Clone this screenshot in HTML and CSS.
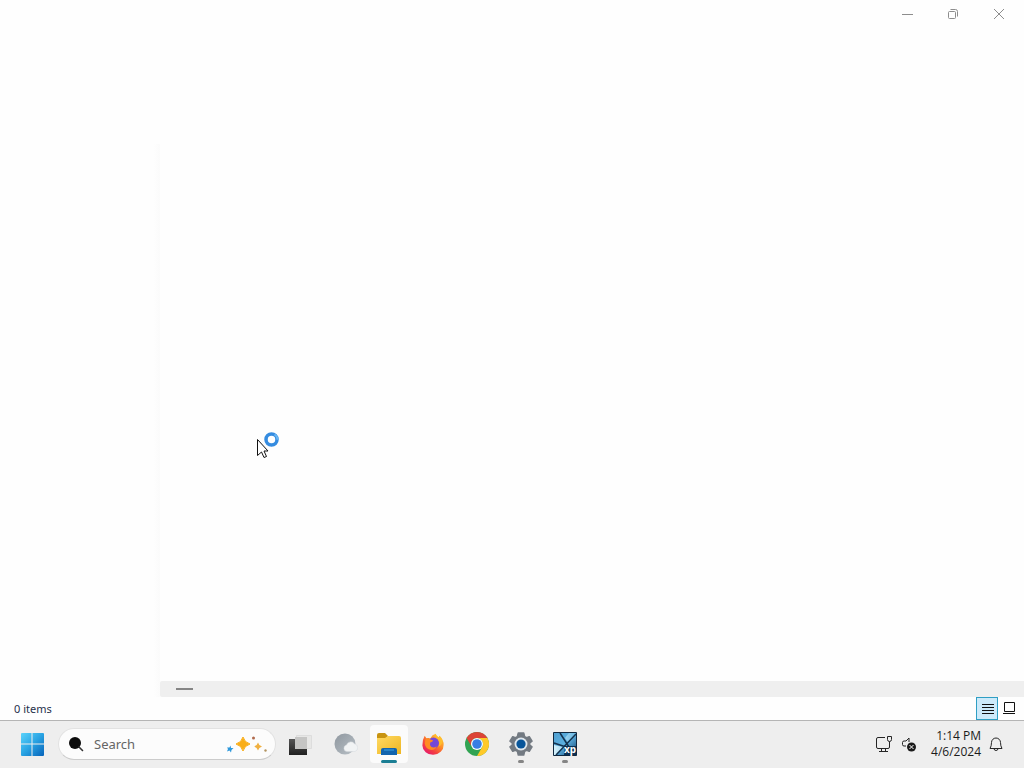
FILE: index.html
```html
<!DOCTYPE html>
<html lang="en">
<head>
<meta charset="utf-8">
<title>File Explorer</title>
<link rel="stylesheet" href="styles.css">
</head>
<body>
<main class="window">
  <header class="titlebar">
    <button class="caption" aria-label="Minimize"><svg width="12" height="12" viewBox="0 0 12 12"><path d="M1 6.5h11" /></svg></button>
    <button class="caption" aria-label="Restore"><svg width="12" height="12" viewBox="0 0 12 12"><rect x="1.5" y="3.500" width="7" height="7" rx="1"/><path d="M3.500 1.500h5q2 0 2 2v5"/></svg></button>
    <button class="caption" aria-label="Close"><svg width="12" height="12" viewBox="0 0 12 12"><path d="M1 1l10 10M11 1L1 11"/></svg></button>
  </header>
  <div class="content">
    <nav class="sidebar" aria-label="Navigation"></nav>
    <section class="files" aria-label="Files">
      <div class="scrollbar"><div class="thumb"></div></div>
    </section>
  </div>
  <footer class="status">
    <span class="count">0 items</span>
    <button class="view active" aria-label="Details view"><svg width="14" height="12" viewBox="0 0 14 12"><path d="M2 1.500h12M2 4.500h12M2 7.500h12M2 10.500h12"/></svg></button>
    <button class="view" aria-label="Large icons view"><svg width="14" height="14" viewBox="0 0 14 14"><path d="M2.500 .5h10v9h-10zM1 11.500h12"/></svg></button>
  </footer>
</main>
<footer class="taskbar">
  <button class="start" aria-label="Start">
    <svg width="24" height="24" viewBox="0 0 24 24">
      <defs><linearGradient id="win" gradientUnits="userSpaceOnUse" x1="1" y1="1" x2="23" y2="23"><stop offset="0" stop-color="#5bd3fb"/><stop offset=".5" stop-color="#2aa5e4"/><stop offset="1" stop-color="#0968bd"/></linearGradient></defs>
      <path fill="url(#win)" d="M2 1h9.500v10.500H1V2q0-1 1-1zM12.500 1H23q1 0 1 1v9.500H12.500zM1 12.500h10.500V24H2q-1 0-1-1zM12.500 12.500H24V23q0 1-1 1H12.500z"/>
    </svg>
  </button>
  <label class="search">
    <svg width="16" height="16" viewBox="0 0 16 16"><circle cx="7" cy="7" r="6" fill="#0c0c0c"/><path d="M11 11l3.500 3.500" stroke="#333" stroke-width="1.600" stroke-linecap="round"/></svg>
    <input type="text" placeholder="Search" aria-label="Search">
    <svg class="sparkles" width="42" height="20" viewBox="0 0 42 20">
      <path fill="#f9ae19" stroke="#f9ae19" stroke-linejoin="round" d="M17 3q1.500 5.500 7 7q-5.500 1.500-7 7q-1.500-5.500-7-7q5.500-1.500 7-7z"/>
      <path fill="#f0b040" d="M32 8.500q.8 3.200 4 4q-3.200.8-4 4q-.8-3.200-4-4q3.200-.8 4-4z"/>
      <path fill="#2d98dc" d="M4.500 11.500l.5 2.500 2.500 0-2 2-.5 2.500-1.500-2-2.500 1 1-2.500-1-1.500 2.500 0z"/>
      <circle cx="27.500" cy="4" r="1.500" fill="#b06a4c"/><circle cx="39.500" cy="16.500" r="1.200" fill="#b39562"/>
    </svg>
  </label>
  <nav class="apps" aria-label="Apps">
    <button class="app" aria-label="Task view"><svg width="26" height="26" viewBox="0 0 26 26"><defs><linearGradient id="tv" x2="0" y2="1"><stop stop-color="#555"/><stop offset="1" stop-color="#202020"/></linearGradient></defs><path fill="#e7e7e6" stroke="#dddddd" d="M8.500 4.500h15v13h-15z"/><path fill="url(#tv)" d="M1 8h18v16H1z"/><path fill="#c5c5c4" d="M7 6h12v12H7z"/></svg></button>
    <button class="app" aria-label="Copilot"><svg width="26" height="26" viewBox="0 0 26 26"><defs><linearGradient id="gr" x2="1" y2="1"><stop stop-color="#8f979f"/><stop offset="1" stop-color="#b8c0c6"/></linearGradient></defs><circle cx="13" cy="13" r="10.500" fill="url(#gr)"/><path d="M15 20.500a3.300 3.300 0 01-.5-6.500a4.500 4.500 0 018-1.200a4 4 0 01.5 7.700z" fill="#f1f3f4" stroke="#d5d9dc" stroke-width=".5"/></svg></button>
    <button class="app current" aria-label="File Explorer"><svg width="26" height="26" viewBox="0 0 26 26"><defs><linearGradient id="fold" x2="1" y2="1"><stop stop-color="#ffda63"/><stop offset="1" stop-color="#eeb522"/></linearGradient></defs><path fill="#c89412" d="M1 8V4q0-2 2-2h6l3 3-3 4z"/><path fill="url(#fold)" d="M1 7h8l3-2h11q2 0 2 2v16H1z"/><path fill="#1264ad" d="M5 24v-5q0-2 2-2h12q2 0 2 2v5z"/><path fill="#2784c9" d="M8 18h10v2H8z"/></svg></button>
    <button class="app" aria-label="Firefox"><svg width="24" height="24" viewBox="0 0 26 26"><defs><linearGradient id="fire" x1="1" y1="0" x2=".2" y2="1"><stop stop-color="#ffe044"/><stop offset=".42" stop-color="#ff9125"/><stop offset=".75" stop-color="#f33c43"/><stop offset="1" stop-color="#e31572"/></linearGradient></defs><path fill="url(#fire)" d="M4 4l2 3q2-1 4 0q2-4 6-5q0 2 3 4l1-2q5 5 4.500 10a11.500 10.500 0 01-23 .5Q1.500 8 4 4z"/><circle cx="13.500" cy="12" r="6" fill="#7548d8"/><path fill="#ff8b20" d="M5 7q3-1 5 1l3 1q0 2-3 2.500q-1 3 1 4.500q3 2 6-.5q-1 4-6 4q-6-1-7-7z"/><path fill="#ffbd2c" d="M15 2q0 3 3 5q3 4 1 9q5-3 4-8q-1-2-3-4l-1 2z"/></svg></button>
    <button class="app" aria-label="Chrome"><svg width="26" height="26" viewBox="0 0 26 26"><circle cx="13" cy="13" r="12" fill="#31a352"/><path fill="#dc4437" d="M2.600 7A12 12 0 0123.400 7H13a6 6 0 00-5.200 9z"/><path fill="#ffc928" d="M23.400 7A12 12 0 0113 25l5.200-9A6 6 0 0013 7z"/><circle cx="13" cy="13" r="6" fill="#fff"/><circle cx="13" cy="13" r="4.800" fill="#377ee4"/></svg></button>
    <button class="app running" aria-label="Settings"><svg width="24" height="24" viewBox="0 0 26 26"><path fill="#737a82" stroke="#737a82" stroke-width="1.500" stroke-linejoin="round" d="M10 1h6l1 4 2 1 3-1 3 5-2.500 2v2l2.500 2-3 5-3-1-2 1-1 4h-6l-1-4-2-1-3 1-3-5 2.500-2v-2L1 10l3-5 3 1 2-1z"/><circle cx="13" cy="13" r="7" fill="#dfe7ed"/><circle cx="13" cy="13" r="5" fill="#07559a"/></svg></button>
    <button class="app running" aria-label="xp"><svg width="26" height="26" viewBox="0 0 26 26"><defs><linearGradient id="xp" x2="1" y2="1"><stop stop-color="#4f9fd0"/><stop offset=".5" stop-color="#5db0e0"/><stop offset="1" stop-color="#0d3c69"/></linearGradient><linearGradient id="glow" x2="1" y2="0"><stop stop-color="#d5f1fb"/><stop offset="1" stop-color="#62b4e2"/></linearGradient></defs><path fill="url(#xp)" d="M1.500 1.500h23v23h-23z"/><path fill="url(#glow)" d="M2 14l9 2-7 8H2zM17 2h7v2l-8 7-3-4z"/><path fill="none" stroke="#10283f" d="M1.500 1.500h23v23h-23z"/><path fill="none" stroke="#14324f" stroke-width="1.500" d="M8 2l9 14M2 12l12 4M24 3L4 24"/><path fill="#0b3155" d="M13 15h11v9H12z"/><text class="xp" x="12" y="22">xp</text></svg></button>
  </nav>
  <div class="tray">
    <button class="network" aria-label="Network"><svg width="18" height="18" viewBox="0 0 18 18"><path d="M10 2.500H3q-1.500 0-1.500 1.500v8q0 1.500 1.500 1.500h10q1.500 0 1.500-1.500V8M6.500 13.500v3M10.500 13.500v3M4 16.500h9M12.500 1.500h4v3q0 2-2 2t-2-2zM14.500 6.500v3"/></svg></button>
    <button class="volume" aria-label="Volume muted"><svg width="16" height="16" viewBox="0 0 16 16"><path d="M7 6V2L4 5H2Q.5 5 .5 6.500v2Q.5 10 2 10h2"/><circle cx="9.500" cy="11" r="4.500" fill="#1b1b1b" stroke="none"/><path d="M7.500 9l4 4M11.500 9l-4 4" stroke="#fff"/></svg></button>
    <button class="clock"><span>1:14 PM</span><span>4/6/2024</span></button>
    <button class="bell" aria-label="Notifications"><svg width="14" height="16" viewBox="0 0 14 16"><path d="M1 12.500q1.500-2.500 1.500-6a4.500 4.500 0 019 0q0 3.500 1.500 6zM5 12.500q0 2 2 2t2-2"/></svg></button>
  </div>
</footer>
<svg class="cursor" width="24" height="28" viewBox="0 0 24 28"><circle cx="15.500" cy="7.500" r="5.500" fill="#fff" stroke="#358ce0" stroke-width="3.500"/><path d="M18.500 2.500a6 6 0 013 5.200" fill="none" stroke="#68b7f5" stroke-width="2"/><path d="M1.500 7.500v16l4-3.500 2.500 5.500 2.500-1-2.500-5.500h4z" fill="#fff" stroke="#111"/></svg>
</body>
</html>
```
FILE: styles.css
```css
* { box-sizing: border-box; }
body {
  margin: 0;
  min-height: 100vh;
  display: flex;
  flex-direction: column;
  position: relative;
  background: #fefefe;
  color: #1b1b1b;
  font: 12px/16px "Noto Sans", "Open Sans", sans-serif;
}
button {
  display: flex;
  align-items: center;
  justify-content: center;
  padding: 0;
  border: 0;
  background: none;
  color: inherit;
  font: inherit;
}
svg { display: block; flex: none; }
.window { flex: 1; display: flex; flex-direction: column; }
.titlebar { display: flex; justify-content: flex-end; height: 28px; padding-right: 2px; }
.caption { width: 46px; }
.caption svg { fill: none; stroke: #8d8d8d; }
.content { flex: 1; display: flex; }
.sidebar { width: 160px; margin-top: 116px; background: linear-gradient(90deg, #fefefe 96%, #fbfbfb); }
.files { flex: 1; display: flex; flex-direction: column; justify-content: flex-end; }
.scrollbar { height: 16px; padding: 7px 16px; background: #efefef; border-radius: 2px 0 0 2px; }
.thumb { width: 17px; height: 2px; background: #858585; }
.status { display: flex; align-items: center; height: 23px; padding: 0 4px 0 14px; }
.count { flex: 1; color: #27304b; font-size: 11px; }
.view { width: 22px; height: 23px; border: 1px solid transparent; }
.view.active { border-color: #2f9fc4; background: #cdeafa; }
.view svg { fill: none; stroke: #111; }
.taskbar {
  display: flex;
  align-items: center;
  height: 48px;
  padding-bottom: 2px;
  border-top: 1px solid #b5b5b5;
  background: #eeeeee;
}
.start { width: 44px; height: 44px; margin-left: 10px; }
.search {
  display: flex;
  align-items: center;
  gap: 10px;
  width: 218px;
  height: 32px;
  margin: 0 3px 0 4px;
  padding: 0 7px 0 9px;
  border: 1px solid #e2e2e2;
  border-bottom-color: #cccccc;
  border-radius: 16px;
  background: #fcfcfc;
}
.search input {
  flex: 1;
  min-width: 0;
  padding: 0;
  border: 0;
  background: none;
  font: 13px/18px "Noto Sans", "Open Sans", sans-serif;
}
.search input::placeholder { color: #656565; opacity: 1; }
.apps { display: flex; flex: 1; }
.app { width: 44px; height: 44px; position: relative; }
.app.current::before {
  content: "";
  position: absolute;
  inset: 3px;
  border-radius: 4px;
  background: #fbfbfb;
}
.app svg { position: relative; }
.app.current::after, .app.running::after {
  content: "";
  position: absolute;
  bottom: 3px;
  width: 6px;
  height: 3px;
  border-radius: 2px;
  background: #858585;
}
.app.current::after { width: 16px; background: #1b7e94; }
.xp { fill: #fff; font: bold 10px "Noto Sans", sans-serif; }
.tray { display: flex; align-items: center; padding-right: 21px; }
.tray svg { fill: none; stroke: #252525; }
.network { width: 26px; height: 32px; }
.volume { width: 26px; height: 32px; }
.clock { flex-direction: column; align-items: flex-end; margin: 0 8px; font: 12px/16px "Open Sans", "Noto Sans", sans-serif; }
.cursor { position: absolute; left: 256px; top: 432px; }
```
